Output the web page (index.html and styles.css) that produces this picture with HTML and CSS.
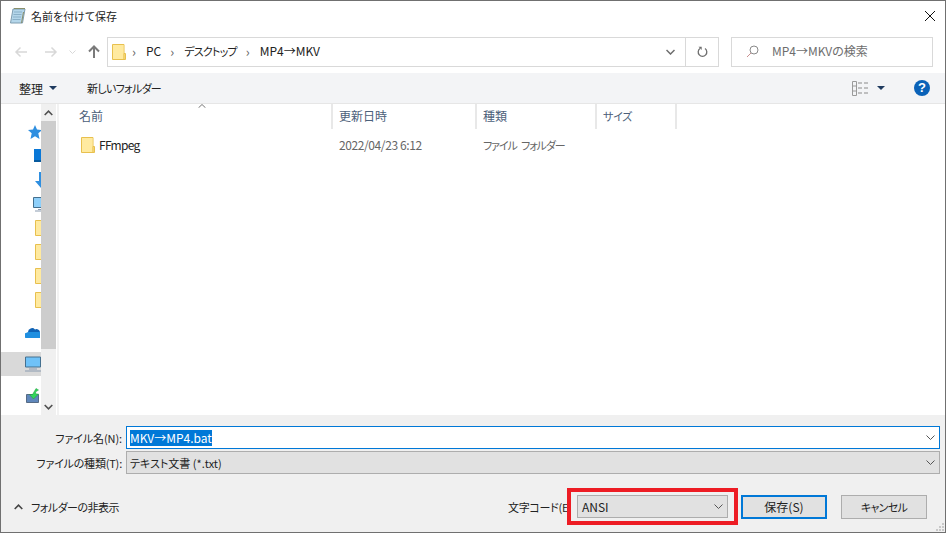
FILE: index.html
```html
<!DOCTYPE html>
<html lang="ja">
<head>
<meta charset="utf-8">
<title>名前を付けて保存</title>
<link rel="stylesheet" href="styles.css">
</head>
<body>
<svg class="defs" width="0" height="0" aria-hidden="true">
  <defs>
    <symbol id="folder" viewBox="0 0 16 16">
      <path d="M.5.5h11.5v15H.5z" fill="#ffe68f" stroke="#e8c04e"/>
      <path d="M1 1h10.5v14H1z" fill="#ffeaa0"/>
      <path d="M12 9.500h1.500v6H12z" fill="#ffe68f" stroke="#e8c04e"/>
    </symbol>
  </defs>
</svg>
<div class="win">
  <header class="title">
    <svg class="title-icon" width="16" height="16" viewBox="0 0 16 16">
      <path d="M3 1h12l-2.500 14H.5z" fill="#b4d6ea" stroke="#7f9db0"/>
      <path d="M4 .5h11M13.500 4l-2 11" stroke="#8a8f6a"/>
      <path d="M4 4h8M3.500 6.500h8M3 9h8M2.500 11.500h8" stroke="#8ab0c8"/>
    </svg>
    <span class="title-text">名前を付けて保存</span>
    <svg class="close" width="10" height="10" viewBox="0 0 10 10"><path d="M0 0l10 10M10 0L0 10" stroke="#111" fill="none"/></svg>
  </header>

  <div class="address-row">
    <svg class="nav" width="14" height="12" viewBox="0 0 14 12"><path d="M13 6H2M6.500 1.500L2 6l4.500 4.500" stroke="#d8d8d8" stroke-width="1.500" fill="none"/></svg>
    <svg class="nav nav-fwd" width="14" height="12" viewBox="0 0 14 12"><path d="M1 6h11M7.500 1.500L12 6l-4.500 4.500" stroke="#d8d8d8" stroke-width="1.500" fill="none"/></svg>
    <svg class="nav nav-down" width="7" height="4" viewBox="0 0 7 4"><path d="M.5.500l3 3 3-3" stroke="#d8d8d8" fill="none"/></svg>
    <svg class="nav nav-up" width="12" height="13" viewBox="0 0 12 13"><path d="M6 13V2M1 6.500L6 1.500l5 5" stroke="#7a7a7a" stroke-width="2" fill="none"/></svg>
    <div class="address">
      <svg class="addr-folder" width="16" height="16"><use href="#folder"/></svg>
      <span class="crumb-sep">›</span><span class="crumb">PC</span>
      <span class="crumb-sep">›</span><span class="crumb crumb-kana">デスクトップ</span>
      <span class="crumb-sep">›</span><span class="crumb">MP4→MKV</span>
      <span class="addr-spring"></span>
      <svg class="addr-chev" width="9" height="6" viewBox="0 0 9 6"><path d="M.5 1l4 4 4-4" stroke="#6d6d6d" stroke-width="1.500" fill="none"/></svg>
      <span class="addr-refresh">
        <svg width="11" height="12" viewBox="0 0 11 12"><path d="M3 2.500a4.300 4.300 0 1 0 5 0" stroke="#6d6d6d" stroke-width="1.300" fill="none"/><path d="M1.500.8h3.200v3.200z" fill="#6d6d6d"/></svg>
      </span>
    </div>
    <div class="search">
      <svg width="13" height="13" viewBox="0 0 13 13"><circle cx="8" cy="5" r="4" stroke="#8a8a8a" fill="none"/><path d="M5 8l-4 4" stroke="#c98f8f" fill="none"/></svg>
      <span class="search-text">MP4→MKVの検索</span>
    </div>
  </div>

  <div class="toolbar">
    <span class="tool">整理</span>
    <span class="caret"></span>
    <span class="tool tool-new">新しいフォルダー</span>
    <span class="tool-spring"></span>
    <svg width="16" height="15" viewBox="0 0 16 15"><path d="M.5.500h4v14h-4zM.5 5h4M.5 10h4" stroke="#9a9a9a" fill="none"/><path d="M6 2h4M12 2h4M6 7h4M12 7h4M6 12h4M12 12h4" stroke="#8a8a8a"/></svg>
    <span class="caret caret-view"></span>
    <span class="help">?</span>
  </div>

  <div class="content">
    <nav class="side">
      <div class="side-row lv1s"><svg width="16" height="16" viewBox="0 0 16 16"><path d="M8 1l2 4.500 5 .5-3.700 3.300L12.500 15 8 12.300 3.500 15l1.200-5.700L1 6l5-.5z" fill="#2f8fe0"/></svg></div>
      <div class="side-row lv2b"><svg width="16" height="16" viewBox="0 0 16 16"><path d="M1 1h12v11H1z" fill="#0a78d7"/><path d="M1 12h12v2H1z" fill="#075a9e"/></svg></div>
      <div class="side-row lv2b"><svg width="16" height="16" viewBox="0 0 16 16"><path d="M6 0h4v9h4l-6 7-6-7h4z" fill="#2f8fe0"/></svg></div>
      <div class="side-row lv2b"><svg width="16" height="16" viewBox="0 0 16 16"><path d="M.5 1.500h14v10H.5z" fill="#8fd0fa" stroke="#44708f"/><path d="M5 13.500h6M2 15h12" stroke="#8a9bb0"/></svg></div>
      <div class="side-row lv2"><svg width="16" height="16"><use href="#folder"/></svg></div>
      <div class="side-row lv2"><svg width="16" height="16"><use href="#folder"/></svg></div>
      <div class="side-row lv2"><svg width="16" height="16"><use href="#folder"/></svg></div>
      <div class="side-row lv2"><svg width="16" height="16"><use href="#folder"/></svg></div>
      <div class="side-row lv1 side-gap"><svg width="16" height="16" viewBox="0 0 16 16"><path d="M3 8a4 4 0 0 1 7-2.500A3.500 3.500 0 0 1 15 8z" fill="#0f62b5"/><path d="M1 14a2.500 2.500 0 0 1 0-5l2-1h12v6z" fill="#1f8fe0"/></svg></div>
      <div class="side-row lv1 side-gap sel"><svg width="16" height="16" viewBox="0 0 16 16"><path d="M.5 1h15v10H.5z" fill="#6fc2f8" stroke="#44708f"/><path d="M4 13h8" stroke="#8a9bb0"/><path d="M0 15h16" stroke="#8a9bb0"/></svg></div>
      <div class="side-row lv1n side-gap"><svg width="14" height="16" viewBox="0 0 14 16"><path d="M.5 6.500h12v8H.5z" fill="#5f87bb" stroke="#566b85"/><path d="M10 .5l2.500 1.500-3 2 .5 2h2.500L7.500 11 3.500 6.500H6.500z" fill="#33d65a" stroke="#1f9a3c" stroke-width=".5"/></svg></div>
    </nav>
    <div class="scroll">
      <span class="scroll-btn"><svg width="9" height="6" viewBox="0 0 9 6"><path d="M.7 5l3.800-3.800L8.300 5" stroke="#505050" stroke-width="1.600" fill="none"/></svg></span>
      <span class="scroll-thumb"></span>
      <span class="scroll-btn scroll-btn-end"><svg width="9" height="6" viewBox="0 0 9 6"><path d="M.7 1l3.800 3.800L8.300 1" stroke="#505050" stroke-width="1.600" fill="none"/></svg></span>
    </div>
    <span class="splitter"></span>
    <main class="list">
      <div class="list-head">
        <span class="col col-name">名前<svg class="sort" width="8" height="4" viewBox="0 0 8 4"><path d="M.5 3.800L4 .5l3.500 3.300" stroke="#777" fill="none"/></svg></span>
        <span class="col col-date">更新日時</span>
        <span class="col col-type">種類</span>
        <span class="col col-size">サイズ</span>
      </div>
      <div class="list-row">
        <span class="cell-name"><svg width="16" height="16"><use href="#folder"/></svg><span class="cell-name-text">FFmpeg</span></span>
        <span class="cell-date">2022/04/23 6:12</span>
        <span class="cell-type">ファイル フォルダー</span>
      </div>
    </main>
  </div>

  <footer class="bottom">
    <div class="field field-name">
      <label class="field-label label-name">ファイル名(N):</label>
      <div class="input"><span class="selected">MKV→MP4.bat</span><svg class="chev" width="9" height="5" viewBox="0 0 9 5"><path d="M.5.500l4 4 4-4" stroke="#555" fill="none"/></svg></div>
    </div>
    <div class="field field-type">
      <label class="field-label label-type">ファイルの種類(T):</label>
      <div class="select select-type"><span>テキスト文書 (*.txt)</span><svg class="chev" width="9" height="5" viewBox="0 0 9 5"><path d="M.5.500l4 4 4-4" stroke="#555" fill="none"/></svg></div>
    </div>
    <div class="actions">
      <span class="hide-folders"><svg width="9" height="6" viewBox="0 0 9 6"><path d="M.7 5l3.800-3.800L8.300 5" stroke="#444" stroke-width="1.600" fill="none"/></svg>フォルダーの非表示</span>
      <span class="actions-spring"></span>
      <label class="enc-label">文字コード(E)</label>
      <div class="red-box"><div class="select enc-select"><span>ANSI</span><svg class="chev" width="9" height="5" viewBox="0 0 9 5"><path d="M.5.500l4 4 4-4" stroke="#555" fill="none"/></svg></div></div>
      <button class="btn btn-default">保存(S)</button>
      <button class="btn btn-cancel">キャンセル</button>
    </div>
    <svg class="grip" width="10" height="10" viewBox="0 0 10 10"><path d="M7 1h2v2H7zM4 4h2v2H4zM7 4h2v2H7zM1 7h2v2H1zM4 7h2v2H4zM7 7h2v2H7z" fill="#c8c8c8"/></svg>
  </footer>
</div>
</body>
</html>
```

FILE: styles.css
```css
* { box-sizing: border-box; }
html, body { margin: 0; padding: 0; }
body {
  font-family: "Noto Sans CJK JP", "Noto Sans", sans-serif;
  font-size: 12px;
  font-feature-settings: "palt";
  color: #1a1a1a;
  background: #fff;
}
.defs { position: absolute; }
.win {
  width: 946px;
  height: 533px;
  border: 1px solid #707070;
  display: flex;
  flex-direction: column;
  overflow: hidden;
  background: #fff;
}
.title {
  height: 29px;
  flex: none;
  display: flex;
  align-items: center;
  padding: 0 10px 0 9px;
}
.title-icon { margin-right: 5px; }
.title-text { flex: 1; color: #222; font-size: 11px; }
.address-row {
  height: 43px;
  flex: none;
  display: flex;
  align-items: center;
  padding: 0 0 0 13px;
}
.nav { flex: none; }
.nav-fwd { margin-left: 16px; }
.nav-down { margin-left: 11px; }
.nav-up { margin-left: 12px; margin-right: 7px; }
.address {
  width: 612px;
  height: 30px;
  flex: none;
  border: 1px solid #d9d9d9;
  display: flex;
  align-items: center;
  padding-left: 4px;
}
.addr-folder { margin-right: 4px; flex: none; }
.crumb-sep { color: #666; width: 7px; font-size: 13px; margin-right: 7px; line-height: 1; }
.crumb { margin-right: 9px; padding-bottom: 2px; color: #222; }
.crumb-kana { font-size: 11px; letter-spacing: -0.8px; }
.addr-spring { flex: 1; }
.addr-chev { margin-right: 10px; }
.addr-refresh {
  width: 33px;
  height: 28px;
  border-left: 1px solid #d9d9d9;
  display: flex;
  align-items: center;
  justify-content: center;
}
.search {
  width: 202px;
  height: 30px;
  flex: none;
  margin-left: 12px;
  border: 1px solid #d9d9d9;
  display: flex;
  align-items: center;
  padding-left: 14px;
}
.search-text { margin-left: 13px; padding-bottom: 2px; color: #6d6d6d; }
.toolbar {
  height: 31px;
  flex: none;
  display: flex;
  align-items: center;
  background: #f3f4f6;
  border-bottom: 1px solid #e6e6e6;
  padding: 0 15px 0 18px;
}
.tool { color: #222; }
.tool-new { margin-left: 30px; font-size: 11px; letter-spacing: -0.7px; }
.caret {
  width: 0;
  height: 0;
  margin-left: 6px;
  border-left: 4px solid transparent;
  border-right: 4px solid transparent;
  border-top: 4px solid #1f3a5f;
}
.tool-spring { flex: 1; }
.caret-view { margin-left: 9px; }
.help {
  width: 16px;
  height: 16px;
  margin-left: 29px;
  border-radius: 50%;
  background: #0a62b8;
  color: #fff;
  font: bold 13px/16px "Liberation Sans", sans-serif;
  text-align: center;
}
.content { flex: 1; min-height: 0; display: flex; }
.side {
  width: 40px;
  flex: none;
  overflow: hidden;
  padding-top: 16px;
}
.side-row {
  height: 24px;
  display: flex;
  align-items: center;
  overflow: hidden;
}
.side-row svg { flex: none; }
.lv1 { padding-left: 24px; }
.lv1s { padding-left: 26px; }
.lv1n { padding-left: 25px; }
.lv2 { padding-left: 34px; }
.lv2b { padding-left: 32px; }
.side-gap { margin-top: 8px; }
.sel { background: #d9d9d9; }
.scroll {
  width: 15px;
  flex: none;
  background: #f0f0f0;
  display: flex;
  flex-direction: column;
}
.scroll-btn {
  height: 17px;
  flex: none;
  display: flex;
  align-items: center;
  justify-content: center;
}
.scroll-thumb { height: 228px; flex: none; background: #cdcdcd; }
.scroll-btn-end { margin-top: auto; }
.splitter {
  width: 2px;
  margin-left: 1px;
  flex: none;
  background: #f2f2f2;
}
.list { flex: 1; min-width: 0; }
.list-head { height: 25px; display: flex; color: #4c607a; }
.col {
  display: flex;
  align-items: center;
  border-right: 2px solid #e8e8e8;
  padding: 0 0 2px 6px;
  position: relative;
}
.col-name { width: 274px; padding-left: 20px; }
.col-date { width: 144px; }
.col-type { width: 120px; }
.col-size { width: 80px; font-size: 11px; letter-spacing: -0.3px; }
.sort { position: absolute; left: 139px; top: 0; }
.list-row {
  height: 31px;
  display: flex;
  align-items: center;
  padding-left: 22px;
  color: #666;
}
.cell-name {
  width: 258px;
  display: flex;
  align-items: center;
  gap: 2px;
  color: #222;
}
.cell-name-text { letter-spacing: -0.7px; }
.cell-date { width: 144px; letter-spacing: -0.4px; }
.cell-type { font-size: 11px; letter-spacing: -1.1px; word-spacing: 3px; }
.bottom {
  height: 117px;
  flex: none;
  background: #f0f0f0;
  position: relative;
  padding: 11px 5px 0 0;
  display: flex;
  flex-direction: column;
}
.field { display: flex; align-items: center; }
.field-label { width: 121px; text-align: right; margin-right: 4px; color: #222; font-size: 11px; }
.label-name { letter-spacing: -0.1px; }
.label-type { letter-spacing: -0.2px; }
.field-name { height: 23px; }
.field-type { height: 23px; margin-top: 2px; }
.input {
  flex: 1;
  height: 23px;
  border: 1px solid #0078d7;
  background: #fff;
  display: flex;
  align-items: center;
  padding-left: 3px;
}
.selected { background: #0078d7; color: #fff; line-height: 16px; }
.select {
  flex: 1;
  height: 23px;
  border: 1px solid #adadad;
  background: #e1e1e1;
  display: flex;
  align-items: center;
  padding-left: 3px;
  color: #222;
}
.select-type { font-size: 11px; }
.chev { margin-left: auto; margin-right: 4px; flex: none; }
.actions {
  flex: none;
  display: flex;
  align-items: center;
  height: 37px;
  margin-top: 14px;
  padding-left: 13px;
  padding-right: 13px;
}
.hide-folders { display: flex; align-items: center; gap: 8px; color: #222; font-size: 11px; letter-spacing: -0.5px; }
.actions-spring { flex: 1; }
.enc-label {
  margin-right: 0;
  color: #222;
  width: 59px;
  white-space: nowrap;
  overflow: hidden;
  font-size: 11px;
  letter-spacing: -0.3px;
}
.red-box {
  width: 171px;
  height: 37px;
  border: 4px solid #ed1c24;
  padding: 3px 6px;
  display: flex;
}
.enc-select { padding-left: 4px; }
.btn {
  width: 86px;
  height: 24px;
  font: inherit;
  font-feature-settings: inherit;
  color: #222;
  background: #e1e1e1;
  border: 1px solid #adadad;
  padding: 0;
}
.btn-default { margin-left: 3px; border: 2px solid #0078d7; }
.btn-cancel { margin-left: 14px; font-size: 11px; letter-spacing: -0.7px; }
.grip { position: absolute; right: 0; bottom: 0; }
```
